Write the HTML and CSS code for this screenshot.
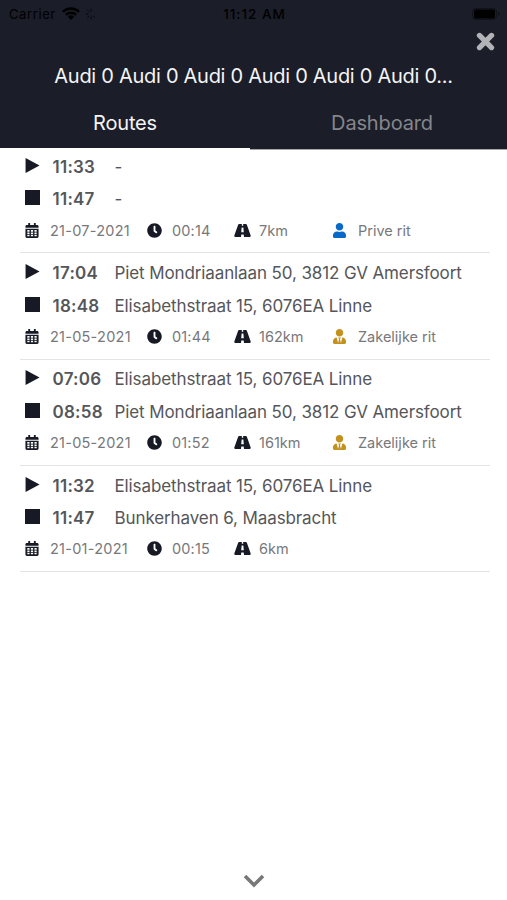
FILE: index.html
```
<!DOCTYPE html>
<html lang="nl">
<head>
  <meta charset="UTF-8">
  <meta name="viewport" content="width=device-width, initial-scale=1.0">
  <title>Routes</title>
  <link rel="stylesheet" href="styles.css">
</head>
<body>
  <!-- Shared icons -->
  <svg class="sprite" width="0" height="0">
    <symbol id="play" viewBox="0 0 16 16"><path d="M.6 0v16L15.500 8z"/></symbol>
    <symbol id="stop" viewBox="0 0 16 16"><path d="M0 0h16v16H0z"/></symbol>
    <symbol id="calendar" viewBox="0 0 448 512">
      <path fill-rule="evenodd" d="M0 192v272c0 26 22 48 48 48h352c26 0 48-22 48-48V192zM64 240h76v60H64zm122 0h76v60h-76zm122 0h76v60h-76zM64 324h76v54H64zm122 0h76v54h-76zm122 0h76v54h-76zM64 402h76v54H64zm122 0h76v54h-76zm122 0h76v54h-76zM448 160v-48c0-26-22-48-48-48h-48V12c0-7-5-12-12-12h-40c-7 0-12 5-12 12v52H160V12c0-7-5-12-12-12h-40c-7 0-12 5-12 12v52H48c-26 0-48 22-48 48v48z"/>
    </symbol>
    <symbol id="clock" viewBox="0 0 512 512">
      <path d="M256,8C119,8,8,119,8,256S119,504,256,504,504,393,504,256,393,8,256,8Zm92.49,313h0l-20,25a16,16,0,0,1-22.49,2.5h0l-67-49.72a40,40,0,0,1-15-31.23V112a16,16,0,0,1,16-16h32a16,16,0,0,1,16,16V256l58,42.5A16,16,0,0,1,348.49,321Z"/>
    </symbol>
    <symbol id="road" viewBox="0 0 576 448">
      <path d="M266 0H174c-18 0-30 10-36 26L6 400c-8 26 8 48 34 48h196l10-90h84l10 90h196c26 0 42-22 34-48L438 26c-6-16-18-26-36-26h-92l4 60h-52zM258 120h60l14 160h-88z" fill-rule="evenodd"/>
    </symbol>
    <symbol id="user" viewBox="0 0 448 512">
      <path d="M224 256c70.7 0 128-57.3 128-128S294.7 0 224 0 96 57.3 96 128s57.3 128 128 128zm89.6 32h-16.7c-22.2 10.2-46.9 16-72.9 16s-50.6-5.8-72.9-16h-16.7C60.2 288 0 348.2 0 422.4V464c0 26.5 21.5 48 48 48h352c26.5 0 48-21.5 48-48v-41.6c0-74.2-60.2-134.4-134.4-134.4z"/>
    </symbol>
    <symbol id="user-tie" viewBox="0 0 448 512">
      <path d="M224 256c70.7 0 128-57.3 128-128S294.7 0 224 0 96 57.3 96 128s57.3 128 128 128zm95.8 32.6L272 480l-32-136 32-56h-96l32 56-32 136-47.8-191.4C56.9 292 0 350.3 0 422.4V464c0 26.5 21.5 48 48 48h352c26.5 0 48-21.5 48-48v-41.6c0-72.1-56.9-130.4-128.2-133.8z"/>
    </symbol>
  </svg>

  <header class="header">
    <!-- Status bar -->
    <div class="status">
      <div class="status-left">
        <span class="carrier">Carrier</span>
        <svg class="wifi" viewBox="0 0 18 13">
          <path d="M1 4.8a11.5 11.5 0 0 1 16 0M3.9 7.8a7.4 7.4 0 0 1 10.2 0" fill="none" stroke="#000" stroke-width="2.4"/>
          <path d="M9 13 5.9 9.8a4.5 4.5 0 0 1 6.2 0z"/>
        </svg>
        <svg class="spinner" viewBox="0 0 12 12">
          <path d="M6 .8v2.6M2.3 2.3l1.9 1.9M.8 6h2.6M2.3 9.7l1.9-1.9M6 11.2V8.6M9.7 9.7 7.8 7.8" fill="none" stroke="#000" stroke-width="1"/>
        </svg>
      </div>
      <span class="clock">11:12 AM</span>
      <div class="status-right">
        <svg class="battery" viewBox="0 0 28 12">
          <rect x=".5" y=".5" width="24" height="11" rx="3" fill="none" stroke="#101219"/>
          <rect x="2" y="1.5" width="21" height="9" rx="1.5"/>
          <path d="M26 4v4c1-.3 1.6-1 1.6-2S27 4.300 26 4z" fill="#101219"/>
        </svg>
      </div>
    </div>

    <div class="close-row">
      <svg class="close" viewBox="0 0 18 18"><path d="m3.300 3.300 11.400 11.400M14.700 3.300 3.300 14.700"/></svg>
    </div>

    <h1 class="title">Audi 0 Audi 0 Audi 0 Audi 0 Audi 0 Audi 0...</h1>

    <nav class="tabs">
      <a class="tab active">Routes</a>
      <a class="tab">Dashboard</a>
    </nav>
  </header>

  <!-- Rides -->
  <main class="rides">
    <section class="ride">
      <div class="stop"><svg class="play"><use href="#play"/></svg><b class="time">11:33</b><span class="address">-</span></div>
      <div class="stop"><svg class="square"><use href="#stop"/></svg><b class="time">11:47</b><span class="address">-</span></div>
      <div class="info">
        <svg><use href="#calendar"/></svg><span class="date">21-07-2021</span>
        <svg class="duration"><use href="#clock"/></svg><span>00:14</span>
        <svg class="road"><use href="#road"/></svg><span>7km</span>
        <svg class="private"><use href="#user"/></svg><span class="type">Prive rit</span>
      </div>
    </section>

    <section class="ride">
      <div class="stop"><svg class="play"><use href="#play"/></svg><b class="time">17:04</b><span class="address">Piet Mondriaanlaan 50, 3812 GV Amersfoort</span></div>
      <div class="stop"><svg class="square"><use href="#stop"/></svg><b class="time">18:48</b><span class="address">Elisabethstraat 15, 6076EA Linne</span></div>
      <div class="info">
        <svg><use href="#calendar"/></svg><span class="date">21-05-2021</span>
        <svg class="duration"><use href="#clock"/></svg><span>01:44</span>
        <svg class="road"><use href="#road"/></svg><span>162km</span>
        <svg class="business"><use href="#user-tie"/></svg><span class="type">Zakelijke rit</span>
      </div>
    </section>

    <section class="ride">
      <div class="stop"><svg class="play"><use href="#play"/></svg><b class="time">07:06</b><span class="address">Elisabethstraat 15, 6076EA Linne</span></div>
      <div class="stop"><svg class="square"><use href="#stop"/></svg><b class="time">08:58</b><span class="address">Piet Mondriaanlaan 50, 3812 GV Amersfoort</span></div>
      <div class="info">
        <svg><use href="#calendar"/></svg><span class="date">21-05-2021</span>
        <svg class="duration"><use href="#clock"/></svg><span>01:52</span>
        <svg class="road"><use href="#road"/></svg><span>161km</span>
        <svg class="business"><use href="#user-tie"/></svg><span class="type">Zakelijke rit</span>
      </div>
    </section>

    <section class="ride">
      <div class="stop"><svg class="play"><use href="#play"/></svg><b class="time">11:32</b><span class="address">Elisabethstraat 15, 6076EA Linne</span></div>
      <div class="stop"><svg class="square"><use href="#stop"/></svg><b class="time">11:47</b><span class="address">Bunkerhaven 6, Maasbracht</span></div>
      <div class="info">
        <svg><use href="#calendar"/></svg><span class="date">21-01-2021</span>
        <svg class="duration"><use href="#clock"/></svg><span>00:15</span>
        <svg class="road"><use href="#road"/></svg><span>6km</span>
      </div>
    </section>
  </main>

  <footer class="footer">
    <svg class="chevron" viewBox="0 0 22 14"><path d="m2 2 9 9 9-9"/></svg>
  </footer>
</body>
</html>
```
FILE: styles.css
```
* {
  box-sizing: border-box;
}

body {
  margin: 0;
  height: 100vh;
  display: flex;
  flex-direction: column;
  background: #fff;
  color: #55565a;
  font-family: Inter, "Liberation Sans", sans-serif;
  overflow: hidden;
}

.sprite {
  position: absolute;
}

/* Header */
.header {
  height: 150px;
  background: linear-gradient(#1b1d28, #1b1d28) 0 0 / 100% 149px no-repeat;
  display: flex;
  flex-direction: column;
}

.status {
  display: grid;
  grid-template-columns: 1fr auto 1fr;
  align-items: center;
  height: 27px;
  padding: 0 7px 0 9px;
  color: #000;
  font-size: 13px;
}

.status-left {
  display: flex;
  align-items: center;
}

.carrier {
  letter-spacing: 0.6px;
}

.wifi {
  width: 18px;
  height: 13px;
  margin-left: 6px;
}

.spinner {
  width: 12px;
  height: 12px;
  margin-left: 5px;
  opacity: 0.7;
}

.clock {
  font-size: 13.5px;
  font-weight: 500;
  letter-spacing: 1px;
}

.status-right {
  display: flex;
  justify-content: flex-end;
}

.battery {
  width: 28px;
  height: 12px;
}

.close-row {
  display: flex;
  justify-content: flex-end;
  height: 30px;
  padding: 5px 12px 0 0;
}

.close {
  width: 19px;
  height: 19px;
  fill: none;
  stroke: #b2b3b7;
  stroke-width: 5;
  stroke-linecap: round;
}

.title {
  margin: 0;
  height: 40px;
  line-height: 39px;
  text-align: center;
  font-size: 20px;
  font-weight: 400;
  letter-spacing: -0.28px;
  color: #f4f4f6;
  white-space: nowrap;
}

/* Tabs */
.tabs {
  display: flex;
  flex: 1;
  align-items: flex-start;
}

.tab {
  flex: 1;
  height: 53px;
  padding-left: 7px;
  line-height: 52px;
  text-align: center;
  font-size: 20px;
  letter-spacing: -0.15px;
  color: #85868b;
  border-bottom: 1px solid #a5a6a9;
}

.tab.active {
  height: 52px;
  padding-left: 0;
  flex: 0 0 250px;
  color: #f4f4f6;
  border-bottom: 1px solid #fff;
  box-shadow: 0 1px #fff;
}

/* Ride list */
.rides {
  flex: 1;
  padding: 0 17px 0 20px;
  margin-top: -3px;
}

.ride {
  height: 106.3px;
  padding: 3.6px 0 0 5px;
  border-bottom: 1px solid #e4e4e5;
}

.stop {
  display: grid;
  grid-template-columns: 27.5px 62px 1fr;
  align-items: center;
  height: 32.5px;
  font-size: 17px;
}

.play,
.square {
  width: 15px;
  height: 15px;
  fill: #171924;
  margin-top: -3px;
}

.time {
  font-weight: 600;
  letter-spacing: 0.25px;
}

.address {
  letter-spacing: -0.11px;
  white-space: nowrap;
}

.info {
  display: grid;
  grid-template-columns: 25px 97px 25px 62px 25px 73px 26px 1fr;
  align-items: center;
  height: 29px;
  font-size: 14.5px;
  color: #77787b;
}

.info svg {
  width: 14px;
  height: 15px;
  fill: #171924;
}

.info .date {
  letter-spacing: 0.25px;
}

.info .duration {
  width: 15px;
}

.info .duration + span {
  letter-spacing: 0.15px;
}

.info .road {
  width: 17px;
  height: 13px;
}

.info .private {
  width: 15px;
  fill: #0869c9;
}

.info .business {
  width: 15px;
  fill: #c3921e;
}

/* Bottom arrow */
.footer {
  display: flex;
  justify-content: center;
  padding-bottom: 12px;
}

.chevron {
  width: 22px;
  height: 14px;
  fill: none;
  stroke: #77787a;
  stroke-width: 3.6;
}
```
